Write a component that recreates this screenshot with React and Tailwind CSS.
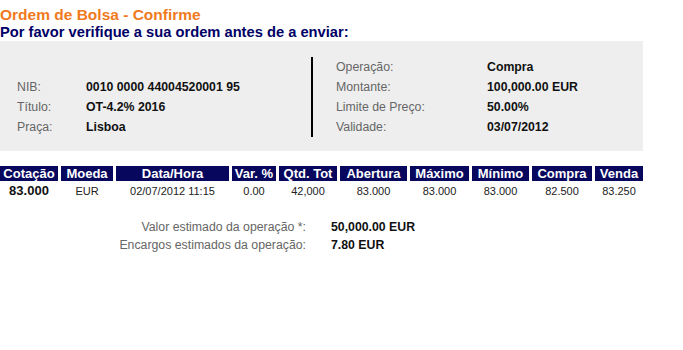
const left = [
  ["NIB:", "0010 0000 44004520001 95"],
  ["Título:", "OT-4.2% 2016"],
  ["Praça:", "Lisboa"]
];

const right = [
  ["Operação:", "Compra"],
  ["Montante:", "100,000.00 EUR"],
  ["Limite de Preço:", "50.00%"],
  ["Validade:", "03/07/2012"]
];

const headers = ["Cotação", "Moeda", "Data/Hora", "Var. %", "Qtd. Tot", "Abertura", "Máximo", "Mínimo", "Compra", "Venda"];
const values = ["83.000", "EUR", "02/07/2012 11:15", "0.00", "42,000", "83.000", "83.000", "83.000", "82.500", "83.250"];

function InfoRow({ label, value, labelWidth }) {
  return (
    <div className="flex h-[20px] items-center">
      <span className="text-[#666]" style={{ width: labelWidth }}>
        {label}
      </span>
      <span className="font-bold text-[#111]">{value}</span>
    </div>
  );
}

export default function App() {
  return (
    <main className="min-h-[350px] bg-white font-['Liberation_Sans',Arial,sans-serif] text-[12.3px]">
      <div className="w-[643px]">
        <h1 className="pt-[5px] text-[15.5px] font-bold leading-[19px] text-[#f07a1d]">Ordem de Bolsa - Confirme</h1>
        <h2 className="text-[14.7px] font-bold leading-[17px] text-[#000066]">Por favor verifique a sua ordem antes de a enviar:</h2>

        <section className="flex bg-[#eeeeee] pb-[14px] pt-[16px]">
          <div className="flex w-[311px] flex-col justify-end pl-[17px]">
            {left.map(([l, v]) => (
              <InfoRow key={l} label={l} value={v} labelWidth={69} />
            ))}
          </div>
          <div className="border-l-2 border-black pl-[23px]">
            {right.map(([l, v]) => (
              <InfoRow key={l} label={l} value={v} labelWidth={151} />
            ))}
          </div>
        </section>

        <div className="mt-[15px] grid grid-cols-[58px_52px_113px_44px_58px_67px_59px_57px_60px_48px] gap-x-[3px]">
          {headers.map((h) => (
            <div key={h} className="flex h-[15px] items-center justify-center bg-[#07075e] text-[13px] font-bold leading-none text-white">
              {h}
            </div>
          ))}
          {values.map((v, i) => (
            <div
              key={i}
              className={`flex h-[20px] items-center justify-center ${
                i === 0 ? "text-[13px] font-bold text-[#111]" : "text-[11px] text-[#222]"
              }`}
            >
              {v}
            </div>
          ))}
        </div>

        <div className="mt-[17px] grid grid-cols-[306px_1fr] gap-x-[25px]">
          <span className="h-[18px] text-right text-[#666]">Valor estimado da operação *:</span>
          <span className="font-bold text-[#111]">50,000.00 EUR</span>
          <span className="text-right text-[#666]">Encargos estimados da operação:</span>
          <span className="font-bold text-[#111]">7.80 EUR</span>
        </div>
      </div>
    </main>
  );
}
